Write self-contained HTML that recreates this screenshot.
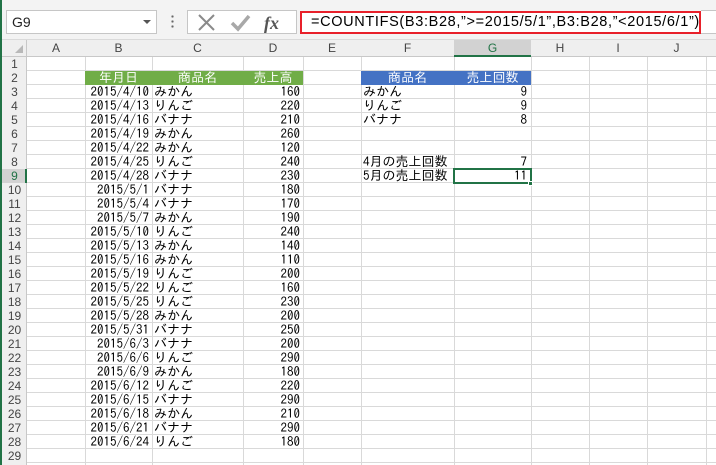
<!DOCTYPE html>
<html><head><meta charset="utf-8"><style>
*{margin:0;padding:0;box-sizing:border-box}
body{width:716px;height:465px;overflow:hidden;background:#fff;position:relative;font-family:"IPAGothic","Liberation Sans","Noto Sans CJK JP",sans-serif;font-size:13px;color:#000}
.top{position:absolute;left:0;top:0;width:716px;height:40px;background:#f3f3f3;border-bottom:1px solid #dadada}
.nb{position:absolute;left:6px;top:10px;width:151px;height:24px;background:#fff;border:1px solid #c6c6c6;font-family:"Liberation Sans",sans-serif;font-size:14px;line-height:22px;padding-left:5px;color:#222}
.nb:after{content:"";position:absolute;right:5px;top:9px;border-left:4px solid transparent;border-right:4px solid transparent;border-top:4px solid #555}
.dots{position:absolute;left:171px;top:14px;width:3px;height:14px;background:radial-gradient(circle,#666 1px,transparent 1.3px) 0 0/3px 5px}
.fx{position:absolute;left:187px;top:10px;width:110px;height:24px;background:#fff;border:1px solid #c6c6c6}
.fm{position:absolute;left:300px;top:11px;width:401px;height:23px;background:#fff;border:2px solid #e8202a;font-family:"Liberation Sans",sans-serif;font-size:14.5px;line-height:19px;padding-left:9px;letter-spacing:0.65px}
.fr{position:absolute;left:701px;top:10px;width:15px;height:24px;background:#fff;border-top:1px solid #c6c6c6;border-bottom:1px solid #c6c6c6}
.grid{position:absolute;left:0;top:57px;width:716px;height:408px;
background-image:repeating-linear-gradient(to bottom,transparent 0,transparent 13px,#d9d9d9 13px,#d9d9d9 14px);background-position:0 0}
.vl{position:absolute;top:40px;width:1px;height:425px;background:#d9d9d9}
.hdr{position:absolute;left:0;top:40px;width:716px;height:17px;background:#efefef;border-bottom:1px solid #c8c8c8;font-family:"Liberation Sans",sans-serif;font-size:12px;color:#444;line-height:17px}
.hdr span{position:absolute;top:0;text-align:center}
.rh{position:absolute;left:0;top:57px;width:27px;height:408px;background:#efefef;border-right:1px solid #c8c8c8}
.gl{position:absolute;left:0;top:0;width:2px;height:465px;background:#217346}
.r{position:absolute;left:0;height:14px;line-height:14px;white-space:nowrap}
.r span{position:absolute;top:0;height:14px}
.n{left:2px;width:25px;text-align:center;font-family:"Liberation Sans",sans-serif;font-size:12px;color:#444}
.b{left:85px;width:64px;text-align:right}
.c{left:154px;width:88px}
.d{left:243px;width:57px;text-align:right}
.f{left:363px;width:90px}
.g{left:454px;width:73px;text-align:right}
</style></head><body>
<div class="top"></div>
<div class="nb">G9</div>
<div class="dots"></div>
<div class="fx">
<svg width="110" height="24" style="position:absolute;left:0;top:0">
<path d="M11 4 L26 19 M26 4 L11 19" stroke="#8a8a8a" stroke-width="2" fill="none"/>
<path d="M44 12 L50 18 L61 5" stroke="#a8a8a8" stroke-width="3.5" fill="none"/>
<text x="76" y="18" font-family="Liberation Serif" font-style="italic" font-weight="bold" font-size="18" fill="#555">fx</text>
</svg></div>
<div class="fm">=COUNTIFS(B3:B28,”&gt;=2015/5/1”,B3:B28,”&lt;2015/6/1”)</div>
<div class="fr"></div>

<div class="grid"></div>
<div class="vl" style="left:85px"></div><div class="vl" style="left:152px"></div><div class="vl" style="left:243px"></div><div class="vl" style="left:303px"></div><div class="vl" style="left:361px"></div><div class="vl" style="left:454px"></div><div class="vl" style="left:531px"></div><div class="vl" style="left:589px"></div><div class="vl" style="left:647px"></div><div class="vl" style="left:706px"></div>

<div class="hdr">
<span style="left:27px;width:58px">A</span><span style="left:85px;width:67px">B</span><span style="left:152px;width:91px">C</span><span style="left:243px;width:60px">D</span><span style="left:303px;width:58px">E</span><span style="left:361px;width:93px">F</span><span style="left:454px;width:77px;background:#d2d2d2;color:#217346;border-bottom:2px solid #217346;height:17px">G</span><span style="left:531px;width:58px">H</span><span style="left:589px;width:58px">I</span><span style="left:647px;width:59px">J</span>
</div>
<div style="position:absolute;left:0;top:40px;width:27px;height:17px;background:#efefef;border-right:1px solid #c8c8c8;border-bottom:1px solid #c8c8c8"><div style="position:absolute;right:3px;bottom:3px;border-left:8px solid transparent;border-bottom:8px solid #b8b8b8"></div></div>
<div class="rh"></div>
<div style="position:absolute;left:2px;top:169px;width:25px;height:14px;background:#d2d2d2;border-right:2px solid #217346"></div>
<div class="gl"></div>

<div style="position:absolute;left:85px;top:71px;width:218px;height:14px;background:#70ad47"></div>
<div style="position:absolute;left:361px;top:71px;width:170px;height:14px;background:#4472c4"></div>
<div style="position:absolute;left:453px;top:168px;width:79px;height:16px;border:2px solid #217346"></div>
<div style="position:absolute;left:528px;top:181px;width:5px;height:5px;background:#217346;border:1px solid #fff"></div>

<div class="r" style="top:57px"><span class="n">1</span></div>
<div class="r" style="top:71px;color:#fff"><span class="n" style="color:#444">2</span><span style="left:85px;width:67px;text-align:center">年月日</span><span style="left:152px;width:91px;text-align:center">商品名</span><span style="left:243px;width:60px;text-align:center">売上高</span><span style="left:361px;width:93px;text-align:center">商品名</span><span style="left:454px;width:77px;text-align:center">売上回数</span></div>
<div class="r" style="top:85px"><span class="n">3</span><span class="b">2015/4/10</span><span class="c">みかん</span><span class="d">160</span><span class="f">みかん</span><span class="g">9</span></div>
<div class="r" style="top:99px"><span class="n">4</span><span class="b">2015/4/13</span><span class="c">りんご</span><span class="d">220</span><span class="f">りんご</span><span class="g">9</span></div>
<div class="r" style="top:113px"><span class="n">5</span><span class="b">2015/4/16</span><span class="c">バナナ</span><span class="d">210</span><span class="f">バナナ</span><span class="g">8</span></div>
<div class="r" style="top:127px"><span class="n">6</span><span class="b">2015/4/19</span><span class="c">みかん</span><span class="d">260</span></div>
<div class="r" style="top:141px"><span class="n">7</span><span class="b">2015/4/22</span><span class="c">みかん</span><span class="d">120</span></div>
<div class="r" style="top:155px"><span class="n">8</span><span class="b">2015/4/25</span><span class="c">りんご</span><span class="d">240</span><span class="f">4月の売上回数</span><span class="g">7</span></div>
<div class="r" style="top:169px"><span class="n" style="color:#217346">9</span><span class="b">2015/4/28</span><span class="c">バナナ</span><span class="d">230</span><span class="f">5月の売上回数</span><span class="g">11</span></div>
<div class="r" style="top:183px"><span class="n">10</span><span class="b">2015/5/1</span><span class="c">バナナ</span><span class="d">180</span></div>
<div class="r" style="top:197px"><span class="n">11</span><span class="b">2015/5/4</span><span class="c">バナナ</span><span class="d">170</span></div>
<div class="r" style="top:211px"><span class="n">12</span><span class="b">2015/5/7</span><span class="c">みかん</span><span class="d">190</span></div>
<div class="r" style="top:225px"><span class="n">13</span><span class="b">2015/5/10</span><span class="c">りんご</span><span class="d">240</span></div>
<div class="r" style="top:239px"><span class="n">14</span><span class="b">2015/5/13</span><span class="c">みかん</span><span class="d">140</span></div>
<div class="r" style="top:253px"><span class="n">15</span><span class="b">2015/5/16</span><span class="c">みかん</span><span class="d">110</span></div>
<div class="r" style="top:267px"><span class="n">16</span><span class="b">2015/5/19</span><span class="c">りんご</span><span class="d">200</span></div>
<div class="r" style="top:281px"><span class="n">17</span><span class="b">2015/5/22</span><span class="c">りんご</span><span class="d">160</span></div>
<div class="r" style="top:295px"><span class="n">18</span><span class="b">2015/5/25</span><span class="c">りんご</span><span class="d">230</span></div>
<div class="r" style="top:309px"><span class="n">19</span><span class="b">2015/5/28</span><span class="c">みかん</span><span class="d">200</span></div>
<div class="r" style="top:323px"><span class="n">20</span><span class="b">2015/5/31</span><span class="c">バナナ</span><span class="d">250</span></div>
<div class="r" style="top:337px"><span class="n">21</span><span class="b">2015/6/3</span><span class="c">バナナ</span><span class="d">200</span></div>
<div class="r" style="top:351px"><span class="n">22</span><span class="b">2015/6/6</span><span class="c">りんご</span><span class="d">290</span></div>
<div class="r" style="top:365px"><span class="n">23</span><span class="b">2015/6/9</span><span class="c">みかん</span><span class="d">180</span></div>
<div class="r" style="top:379px"><span class="n">24</span><span class="b">2015/6/12</span><span class="c">りんご</span><span class="d">220</span></div>
<div class="r" style="top:393px"><span class="n">25</span><span class="b">2015/6/15</span><span class="c">バナナ</span><span class="d">290</span></div>
<div class="r" style="top:407px"><span class="n">26</span><span class="b">2015/6/18</span><span class="c">みかん</span><span class="d">210</span></div>
<div class="r" style="top:421px"><span class="n">27</span><span class="b">2015/6/21</span><span class="c">バナナ</span><span class="d">290</span></div>
<div class="r" style="top:435px"><span class="n">28</span><span class="b">2015/6/24</span><span class="c">りんご</span><span class="d">180</span></div>
<div class="r" style="top:449px"><span class="n">29</span></div>
</body></html>
